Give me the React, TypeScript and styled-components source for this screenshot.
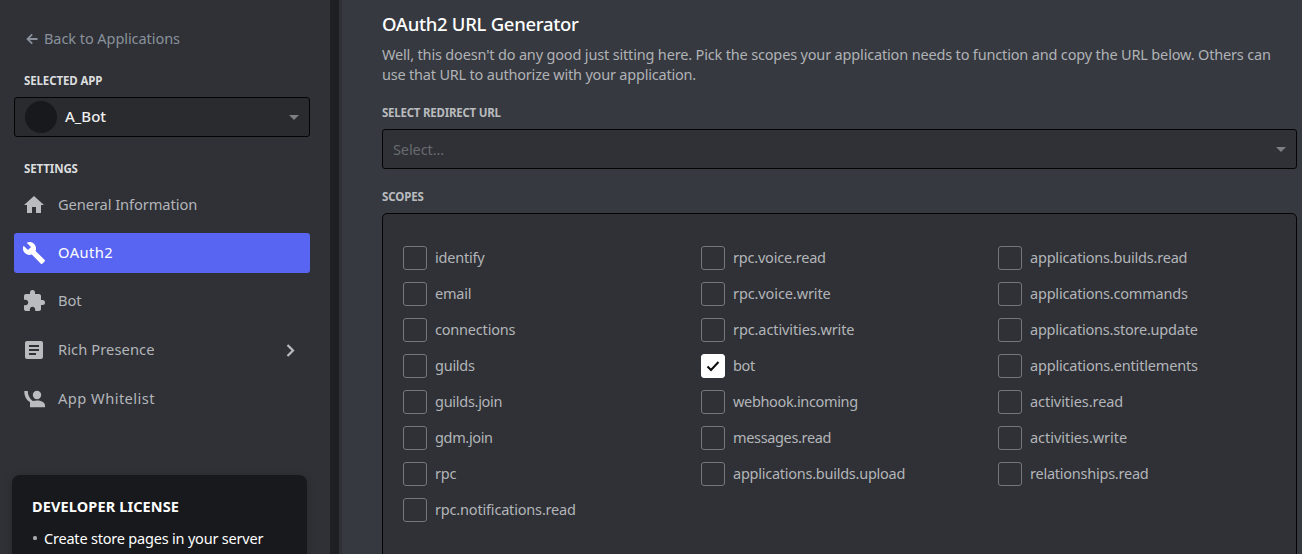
import React from "react";
import styled, { createGlobalStyle, css } from "styled-components";
import { MdHome, MdBuild, MdExtension, MdArticle } from "react-icons/md";

const Global = createGlobalStyle`
  * { box-sizing: border-box; }
  html, body { margin: 0; height: 554px; overflow: hidden; background: #36393f; }
  body { font-family: "Noto Sans", "Open Sans", sans-serif; }
`;

const Page = styled.div`
  display: flex;
  width: 1302px;
  height: 554px;
  overflow: hidden;
`;

const Sidebar = styled.aside`
  width: 330px;
  flex: none;
  padding: 29px 20px 0 14px;
  background: #2f3136;
  display: flex;
  flex-direction: column;
`;

const ScrollTrack = styled.div`
  width: 12px;
  flex: none;
  background: linear-gradient(to right, #1e1f22 9px, #2f3136 9px);
`;

const Label = styled.span<{ $ls?: number }>`
  white-space: nowrap;
  letter-spacing: ${(p) => p.$ls ?? 0}px;
`;

const RowLabel = styled(Label)`
  padding-bottom: 2px;
`;

const BackLink = styled.a`
  display: flex;
  align-items: center;
  height: 20px;
  padding-left: 12px;
  gap: 6px;
  font-size: 14.5px;
  color: #8a919c;
`;

const SideHeading = styled.h5<{ $top: number }>`
  margin: ${(p) => p.$top}px 0 8px 10px;
  height: 16px;
  line-height: 16px;
  font-size: 11.5px;
  font-weight: 700;
  color: #dcddde;
`;

const SelectBox = styled.div<{ $app?: boolean }>`
  height: 40px;
  flex: none;
  display: flex;
  align-items: center;
  padding: 0 10px;
  border: 1px solid #040405;
  border-radius: 3px;
  font-size: 14.5px;
  background: #2f3136;
  color: #686a6f;
  ${(p) =>
    p.$app &&
    css`
      background: #2a2b2f;
      color: #f0f0f1;
      font-size: 15px;
      font-weight: 500;
    `}
`;

const Avatar = styled.div`
  width: 32px;
  height: 32px;
  margin-right: 8px;
  border-radius: 50%;
  background: #18191c;
`;

const Caret = styled.span`
  margin-left: auto;
  border: 5px solid transparent;
  border-top-color: #7d7f83;
  border-bottom-width: 0;
`;

const Nav = styled.nav`
  display: flex;
  flex-direction: column;
`;

const NavItem = styled.a<{ $active?: boolean; $gap?: number }>`
  display: flex;
  align-items: center;
  height: 40px;
  margin-bottom: ${(p) => p.$gap ?? 8}px;
  padding: 0 12px 0 8px;
  gap: 12px;
  border-radius: 3px;
  font-size: 14.7px;
  color: ${(p) => (p.$active ? "#fff" : "#b3b5b9")};
  background: ${(p) => (p.$active ? "#5865f2" : "transparent")};
  > svg { flex: none; color: ${(p) => (p.$active ? "#fff" : "#b9bbbe")}; }
  > svg:last-child { margin-left: auto; }
`;

const LicenseCard = styled.section`
  width: 295px;
  height: 110px;
  flex: none;
  margin: 56px 0 0 -2px;
  padding: 21px 20px;
  border-radius: 8px;
  background: #18191c;
  box-shadow: 0 2px 10px rgba(0, 0, 0, 0.2);
  color: #fff;
`;

const LicenseTitle = styled.h4`
  margin: 0 0 10px;
  line-height: 21px;
  font-size: 14.5px;
  font-weight: 700;
`;

const Bullet = styled.div`
  display: flex;
  align-items: center;
  gap: 7px;
  padding-left: 1px;
  font-size: 14.5px;
  line-height: 22px;
  &::before {
    content: "";
    width: 4px;
    height: 4px;
    border-radius: 1.5px;
    background: #a3a6aa;
  }
`;

const Main = styled.main`
  flex: 1;
  min-width: 0;
  padding: 12px 5px 0 40px;
  background: #36393f;
`;

const Title = styled.h3`
  margin: 0;
  height: 24px;
  line-height: 24px;
  font-size: 18.5px;
  font-weight: 500;
  color: #fff;
`;

const Intro = styled.p`
  margin: 8px 0 0;
  display: flex;
  flex-direction: column;
  font-size: 14.5px;
  line-height: 20px;
  color: #b0b2b6;
`;

const FieldHeading = styled.h5<{ $top: number }>`
  margin: ${(p) => p.$top}px 0 8px;
  height: 16px;
  line-height: 16px;
  font-size: 11.5px;
  font-weight: 700;
  color: #b9bbbe;
`;

const ScopePanel = styled.div`
  display: grid;
  grid-template-columns: 298px 297px 1fr;
  height: 360px;
  padding: 32px 20px;
  border: 1px solid #040405;
  border-radius: 5px;
  background: #2f3136;
`;

const ScopeColumn = styled.div`
  display: flex;
  flex-direction: column;
  gap: 12px;
`;

const Scope = styled.label`
  display: flex;
  align-items: center;
  height: 24px;
  gap: 8px;
  font-size: 14.5px;
  color: #b3b5b9;
`;

const Box = styled.span<{ $on?: boolean }>`
  width: 24px;
  height: 24px;
  flex: none;
  display: flex;
  align-items: center;
  justify-content: center;
  border: 1px solid ${(p) => (p.$on ? "#fff" : "#72767d")};
  border-radius: 3px;
  background: ${(p) => (p.$on ? "#fff" : "transparent")};
`;

const WhitelistIcon = () => (
  <svg width="24" height="24" viewBox="0 0 24 24" fill="currentColor">
    <circle cx="15" cy="8" r="4.2" />
    <path d="M2.300 4h3.500c0 4.200 1.600 7.500 5 9.900 1.200-.3 2.600-.5 4.200-.5 4 0 8 1.800 8 4.800v2.100H8v-5.300C4.300 13 2.300 9.500 2.300 4z" />
  </svg>
);

const columns: [string, number][][] = [
  [
    ["identify", -0.2],
    ["email", -0.2],
    ["connections", -0.2],
    ["guilds", -0.25],
    ["guilds.join", -0.28],
    ["gdm.join", -0.35],
    ["rpc", -0.2],
    ["rpc.notifications.read", -0.18],
  ],
  [
    ["rpc.voice.read", -0.2],
    ["rpc.voice.write", -0.1],
    ["rpc.activities.write", -0.1],
    ["bot", -0.35],
    ["webhook.incoming", -0.34],
    ["messages.read", -0.35],
    ["applications.builds.upload", -0.25],
  ],
  [
    ["applications.builds.read", -0.2],
    ["applications.commands", -0.2],
    ["applications.store.update", -0.22],
    ["applications.entitlements", -0.18],
    ["activities.read", -0.06],
    ["activities.write", -0.04],
    ["relationships.read", -0.24],
  ],
];

export default function App() {
  return (
    <Page>
      <Global />
      <Sidebar>
        <BackLink>
          <svg width="12" height="12" viewBox="0 0 12 12" fill="none" stroke="currentColor" strokeWidth="1.8">
            <path d="M11.500 6H2M6.200 1.300L1.500 6L6.200 10.700" />
          </svg>
          <RowLabel $ls={-0.06}>Back to Applications</RowLabel>
        </BackLink>
        <SideHeading $top={24}><Label $ls={-0.12}>SELECTED APP</Label></SideHeading>
        <SelectBox $app>
          <Avatar />
          <RowLabel>A_Bot</RowLabel>
          <Caret />
        </SelectBox>
        <SideHeading $top={24}><Label $ls={-0.12}>SETTINGS</Label></SideHeading>
        <Nav>
          <NavItem><MdHome size={24} /><RowLabel $ls={-0.1}>General Information</RowLabel></NavItem>
          <NavItem $active><MdBuild size={24} /><RowLabel $ls={0.45}>OAuth2</RowLabel></NavItem>
          <NavItem $gap={9}><MdExtension size={24} /><RowLabel $ls={-0.1}>Bot</RowLabel></NavItem>
          <NavItem $gap={9}>
            <MdArticle size={24} />
            <RowLabel $ls={0.08}>Rich Presence</RowLabel>
            <svg width="16" height="16" viewBox="0 0 16 16" fill="none" stroke="currentColor" strokeWidth="2.2">
              <path d="M5.500 3L11 8.500L5.500 14" />
            </svg>
          </NavItem>
          <NavItem $gap={0}><WhitelistIcon /><RowLabel $ls={0.44}>App Whitelist</RowLabel></NavItem>
        </Nav>
        <LicenseCard>
          <LicenseTitle><Label $ls={0.12}>DEVELOPER LICENSE</Label></LicenseTitle>
          <Bullet><Label $ls={-0.2}>Create store pages in your server</Label></Bullet>
        </LicenseCard>
      </Sidebar>
      <ScrollTrack />
      <Main>
        <Title><Label $ls={-0.3}>OAuth2 URL Generator</Label></Title>
        <Intro>
          <Label $ls={-0.165}>Well, this doesn't do any good just sitting here. Pick the scopes your application needs to function and copy the URL below. Others can</Label>
          <Label $ls={-0.2}>use that URL to authorize with your application.</Label>
        </Intro>
        <FieldHeading $top={21}><Label $ls={-0.24}>SELECT REDIRECT URL</Label></FieldHeading>
        <SelectBox><Label $ls={-0.1}>Select...</Label><Caret /></SelectBox>
        <FieldHeading $top={20}><Label $ls={-0.15}>SCOPES</Label></FieldHeading>
        <ScopePanel>
          {columns.map((column, i) => (
            <ScopeColumn key={i}>
              {column.map(([name, ls]) => (
                <Scope key={name}>
                  <Box $on={name === "bot"}>
                    {name === "bot" && (
                      <svg width="14" height="12" viewBox="0 0 14 12" fill="none" stroke="#0b0b0d" strokeWidth="2">
                        <path d="M1.500 6.500L5 10L12.500 2" />
                      </svg>
                    )}
                  </Box>
                  <RowLabel $ls={ls}>{name}</RowLabel>
                </Scope>
              ))}
            </ScopeColumn>
          ))}
        </ScopePanel>
      </Main>
    </Page>
  );
}
